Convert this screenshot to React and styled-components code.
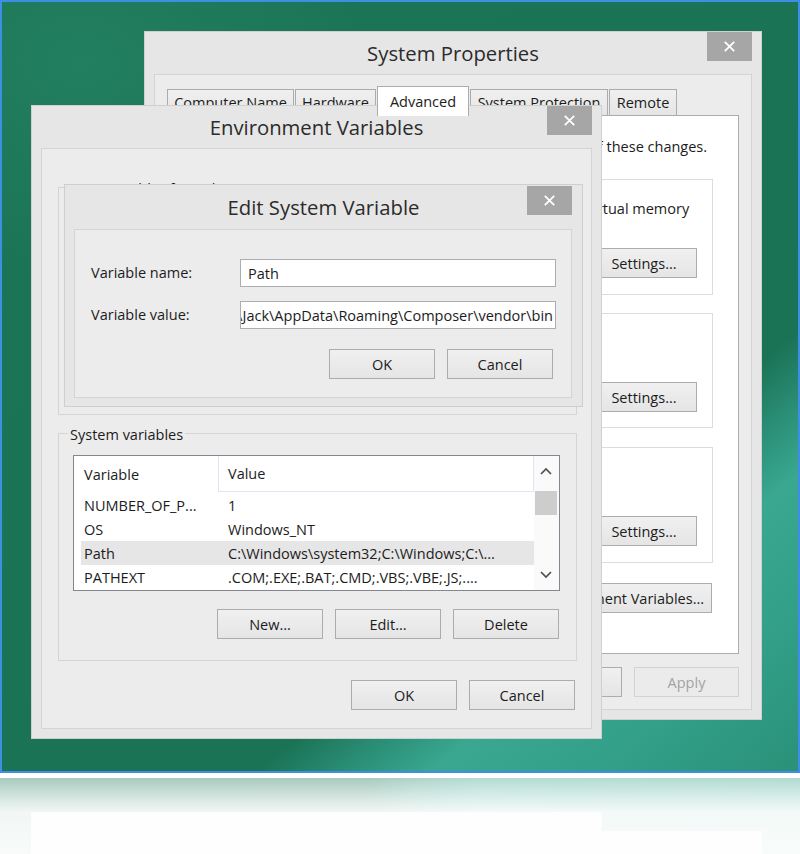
import React from 'react';
import styled, { createGlobalStyle } from 'styled-components';

const GlobalStyle = createGlobalStyle`
  *, *::before, *::after { box-sizing: border-box; }
  html, body { margin: 0; padding: 0; background: #fff; overflow: hidden; }
  body { font-family: "Open Sans", "Noto Sans", "DejaVu Sans", sans-serif; font-size: 14.5px; color: #1c1c1c; }
`;

const Screen = styled.div`
  width: 800px; height: 854px; display: flex; flex-direction: column; background: #fff; overflow: hidden;
`;

const Desktop = styled.main`
  position: relative; flex: none; height: 773px; border: 2px solid #3d8ee4; overflow: hidden;
  background:
    radial-gradient(ellipse 420px 300px at 80px 60px, rgba(60, 170, 130, 0.2), transparent 70%),
    linear-gradient(141deg, #1b7456 0%, #1b7355 69%, #2a8e76 74%, #3aa790 79%, #33a089 88%, #2b9179 100%);
`;

/* ---------- window chrome ---------- */
const Win = styled.section`
  position: absolute; left: ${p => p.$x}px; top: ${p => p.$y}px; width: ${p => p.$w}px; height: ${p => p.$h}px;
  display: flex; flex-direction: column; background: #e6e6e6; border: 1px solid #cfcfcf;
`;
const TitleBar = styled.header`
  flex: none; height: ${p => p.$h}px; display: grid; grid-template-columns: 1fr auto 1fr;
`;
const TitleText = styled.h1`
  grid-column: 2; align-self: center; margin: 0; font-size: 20.3px; font-weight: 400; color: #2b2b2b;
  white-space: nowrap; line-height: 24px;
`;
const CloseBtn = styled.button`
  grid-column: 3; justify-self: end; align-self: start; width: 45px; height: 29px;
  margin: ${p => p.$top}px ${p => p.$right}px 0 0; border: none; padding: 0; background: #a6a6a6;
  display: flex; align-items: center; justify-content: center;
`;
const Client = styled.div`
  flex: 1; min-height: 0; display: flex; flex-direction: column;
  margin: 0 ${p => p.$mr ?? 9}px ${p => p.$mb ?? 9}px ${p => p.$ml ?? 9}px;
  border: 1px solid #d4d4d4; background: #ececec;
`;

const CloseGlyph = () => (
  <svg width="11" height="11" viewBox="0 0 11 11">
    <path d="M0.8 0.8L10.2 10.2M10.2 0.8L0.8 10.2" stroke="#fff" strokeWidth="1.8" />
  </svg>
);

function Dialog({ title, x, y, w, h, titleH = 42, closeTop = 0, closeRight = 9, children }) {
  return (
    <Win $x={x} $y={y} $w={w} $h={h}>
      <TitleBar $h={titleH}>
        <TitleText>{title}</TitleText>
        <CloseBtn $top={closeTop} $right={closeRight} aria-label="Close"><CloseGlyph /></CloseBtn>
      </TitleBar>
      {children}
    </Win>
  );
}

/* ---------- common controls ---------- */
const Button = styled.button`
  flex: none; width: ${p => p.$w ?? 105}px; height: 30px; padding: 0; font: inherit; color: #1c1c1c;
  white-space: nowrap; border: 1px solid #acacac; background: linear-gradient(#f0f0f0, #e5e5e5);
  &:disabled { color: #a3a3a3; border-color: #d2d2d2; background: #ebebeb; }
`;
const ButtonRow = styled.div`
  flex: none; display: flex; justify-content: flex-end; gap: 12px;
  margin-top: ${p => p.$mt ?? 0}px; padding-right: ${p => p.$pr ?? 0}px;
`;
const GroupTitle = styled.div`
  align-self: flex-start; margin: -9px 0 0 ${p => p.$ml ?? 0}px; padding: 0 2px; line-height: 20px;
  white-space: nowrap; background: ${p => p.$bg};
`;

/* ---------- System Properties ---------- */
const SysBody = styled(Client)`padding: 11px 12px 12px;`;
const TabStrip = styled.div`flex: none; height: 29px; display: flex; align-items: flex-end; gap: 1px;`;
const Tab = styled.div`
  flex: none; width: ${p => p.$w}px; height: ${p => (p.$sel ? 30 : 26)}px;
  margin-bottom: ${p => (p.$sel ? -1 : 0)}px; position: relative; z-index: ${p => (p.$sel ? 1 : 0)};
  border: 1px solid #acacac; border-bottom: none;
  background: ${p => (p.$sel ? '#fff' : 'linear-gradient(#f0f0f0, #e5e5e5)')};
  display: flex; align-items: center; justify-content: center; white-space: nowrap;
`;
const TabPanel = styled.div`
  flex: none; height: 539px; border: 1px solid #acacac; background: #fff;
  padding: 21px 25px 0 13px; display: flex; flex-direction: column;
`;
const Note = styled.p`margin: 0 0 0 16px; line-height: 20px; white-space: nowrap;`;
const PanelGroup = styled.div`
  flex: none; height: ${p => p.$h}px; margin-top: ${p => p.$mt}px; border: 1px solid #dcdcdc;
  padding: 0 15px 0 14px; display: flex; flex-direction: column;
`;
const GroupText = styled.p`margin: 8px 0 0 5px; line-height: 20px; white-space: nowrap;`;
const GroupAction = styled.div`align-self: flex-end; margin-top: ${p => p.$mt ?? 29}px; margin-right: ${p => p.$mr ?? 0}px;`;

const tabs = [
  { label: 'Computer Name', w: 127 },
  { label: 'Hardware', w: 81 },
  { label: 'Advanced', w: 92, sel: true },
  { label: 'System Protection', w: 138 },
  { label: 'Remote', w: 68 },
];

const sysGroups = [
  { title: 'Performance', text: 'Visual effects, processor scheduling, memory usage, and virtual memory', mt: 22, h: 116 },
  { title: 'User Profiles', text: 'Desktop settings related to your sign-in', mt: 18, h: 115 },
  { title: 'Startup and Recovery', text: 'System startup, system failure, and debugging information', mt: 19, h: 116 },
];

function SystemProperties() {
  return (
    <Dialog title="System Properties" x={142} y={29} w={618} h={689}>
      <SysBody>
        <TabStrip>
          {tabs.map(t => <Tab key={t.label} $w={t.w} $sel={t.sel}>{t.label}</Tab>)}
        </TabStrip>
        <TabPanel>
          <Note>You must be logged on as an Administrator to make most of these changes.</Note>
          {sysGroups.map(g => (
            <PanelGroup key={g.title} $mt={g.mt} $h={g.h}>
              <GroupTitle $bg="#fff" $ml={-6}>{g.title}</GroupTitle>
              <GroupText>{g.text}</GroupText>
              <GroupAction><Button $w={106}>Settings...</Button></GroupAction>
            </PanelGroup>
          ))}
          <GroupAction $mt={20} $mr={1}><Button $w={180}>Environment Variables...</Button></GroupAction>
        </TabPanel>
        <ButtonRow $mt={13}>
          <Button>OK</Button>
          <Button>Cancel</Button>
          <Button disabled>Apply</Button>
        </ButtonRow>
      </SysBody>
    </Dialog>
  );
}

/* ---------- Environment Variables ---------- */
const EnvBody = styled(Client)`padding: 38px 14px 18px 16px;`;
const FrameGroup = styled.div`
  flex: none; height: 228px; margin-top: ${p => p.$mt ?? 0}px; border: 1px solid #d5d5d5;
  padding: 0 16px 21px 14px; display: flex; flex-direction: column;
`;
const ListBox = styled.div`
  flex: none; margin-top: 10px; height: 136px; border: 1px solid #828790; background: #fff; display: flex;
`;
const ListMain = styled.div`flex: 1; min-width: 0; display: flex; flex-direction: column;`;
const ListHead = styled.div`flex: none; height: 36px; display: flex;`;
const HeadCell = styled.div`
  display: flex; align-items: center; white-space: nowrap;
  ${p => (p.$last
    ? 'flex: 1; padding-left: 9px; border-right: 1px solid #dde6f3; border-bottom: 1px solid #dde6f3;'
    : 'width: 145px; padding-left: 10px; border-right: 1px solid #dde6f3;')}
`;
const ListRows = styled.div`flex: 1; padding-top: 1px; overflow: hidden;`;
const Row = styled.div`
  height: 24px; margin-left: 7px; display: flex; align-items: center; white-space: nowrap;
  background: ${p => (p.$sel ? '#e6e6e6' : 'transparent')};
`;
const NameCell = styled.span`flex: none; width: 137px; padding-left: 3px; overflow: hidden;`;
const ValueCell = styled.span`flex: 1; padding-left: 10px; overflow: hidden;`;
const ScrollBar = styled.div`flex: none; width: 25px; display: flex; flex-direction: column; background: #fafafa;`;
const ScrollArrow = styled.div`flex: none; height: 30px; display: flex; align-items: center; justify-content: center; padding-right: 1px;`;
const ScrollTrack = styled.div`flex: 1; padding-top: 5px;`;
const Thumb = styled.div`height: 24px; margin: 0 2px 0 1px; background: #cdcdcd;`;

const Chevron = ({ up }) => (
  <svg width="12" height="8" viewBox="0 0 12 8">
    <polyline points={up ? '1,7 6,2 11,7' : '1,1 6,6 11,1'} fill="none" stroke="#505050" strokeWidth="1.7" />
  </svg>
);

const sysVars = [
  { name: 'NUMBER_OF_P...', value: '1' },
  { name: 'OS', value: 'Windows_NT' },
  { name: 'Path', value: 'C:\\Windows\\system32;C:\\Windows;C:\\...', sel: true },
  { name: 'PATHEXT', value: '.COM;.EXE;.BAT;.CMD;.VBS;.VBE;.JS;....' },
];

function EnvironmentVariables() {
  return (
    <Dialog title="Environment Variables" x={29} y={103} w={571} h={634}>
      <EnvBody>
        <FrameGroup>
          <GroupTitle $bg="#ececec" $ml={-5}>User variables for Jack</GroupTitle>
        </FrameGroup>
        <FrameGroup $mt={18}>
          <GroupTitle $bg="#ececec" $ml={-5}>System variables</GroupTitle>
          <ListBox>
            <ListMain>
              <ListHead>
                <HeadCell>Variable</HeadCell>
                <HeadCell $last>Value</HeadCell>
              </ListHead>
              <ListRows>
                {sysVars.map(v => (
                  <Row key={v.name} $sel={v.sel}>
                    <NameCell>{v.name}</NameCell>
                    <ValueCell>{v.value}</ValueCell>
                  </Row>
                ))}
              </ListRows>
            </ListMain>
            <ScrollBar>
              <ScrollArrow><Chevron up /></ScrollArrow>
              <ScrollTrack><Thumb /></ScrollTrack>
              <ScrollArrow><Chevron /></ScrollArrow>
            </ScrollBar>
          </ListBox>
          <ButtonRow $mt={18} $pr={1}>
            <Button $w={106}>New...</Button>
            <Button $w={106}>Edit...</Button>
            <Button $w={106}>Delete</Button>
          </ButtonRow>
        </FrameGroup>
        <ButtonRow $mt={19} $pr={2}>
          <Button $w={106}>OK</Button>
          <Button $w={106}>Cancel</Button>
        </ButtonRow>
      </EnvBody>
    </Dialog>
  );
}

/* ---------- Edit System Variable ---------- */
const EditBody = styled(Client)`padding: 29px 15px 18px 16px;`;
const FieldGrid = styled.div`display: grid; grid-template-columns: 149px 316px; grid-template-rows: 28px 28px; row-gap: 14px;`;
const FieldLabel = styled.label`align-self: center; line-height: 20px;`;
const TextBox = styled.div`
  display: flex; align-items: center; overflow: hidden; white-space: nowrap; background: #fff;
  border: 1px solid #abadb3; padding: 0 ${p => (p.$end ? 2 : 7)}px 0 7px;
  justify-content: ${p => (p.$end ? 'flex-end' : 'flex-start')};
  & > span { flex: none; }
`;

const pathValue = 'C:\\Users\\Jack\\AppData\\Roaming\\Composer\\vendor\\bin';

function EditVariable() {
  return (
    <Dialog title="Edit System Variable" x={62} y={182} w={519} h={223} titleH={44} closeTop={1} closeRight={10}>
      <EditBody $mr={10} $mb={8}>
        <FieldGrid>
          <FieldLabel>Variable name:</FieldLabel>
          <TextBox><span>Path</span></TextBox>
          <FieldLabel>Variable value:</FieldLabel>
          <TextBox $end><span>{pathValue}</span></TextBox>
        </FieldGrid>
        <ButtonRow $mt={20} $pr={3}>
          <Button $w={106}>OK</Button>
          <Button $w={106}>Cancel</Button>
        </ButtonRow>
      </EditBody>
    </Dialog>
  );
}

/* ---------- reflection under the desktop ---------- */
const ReflectionGap = styled.div`flex: none; height: 5px; background: #fff;`;
const Mirror = styled.div`
  position: relative; flex: 1; overflow: hidden;
  background: linear-gradient(to right, #1b7456 0%, #1b7456 46%, #2c9179 52%, #38a58e 60%, #32a089 100%);
  &::after {
    content: ''; position: absolute; inset: 0;
    background: linear-gradient(to bottom, rgba(255,255,255,0.62) 0px, rgba(255,255,255,0.84) 22px,
      rgba(255,255,255,0.94) 34px, rgba(255,255,255,0.97) 76px);
  }
`;
const Ghost = styled.div`
  position: absolute; left: ${p => p.$x}px; top: ${p => p.$y}px; width: ${p => p.$w}px; bottom: 0;
  background: #e8e8e8; border: 1px solid #dadada;
`;

export default function App() {
  return (
    <Screen>
      <GlobalStyle />
      <Desktop>
        <SystemProperties />
        <EnvironmentVariables />
        <EditVariable />
      </Desktop>
      <ReflectionGap />
      <Mirror aria-hidden="true">
        <Ghost $x={144} $y={53} $w={618} />
        <Ghost $x={31} $y={34} $w={571} />
      </Mirror>
    </Screen>
  );
}
